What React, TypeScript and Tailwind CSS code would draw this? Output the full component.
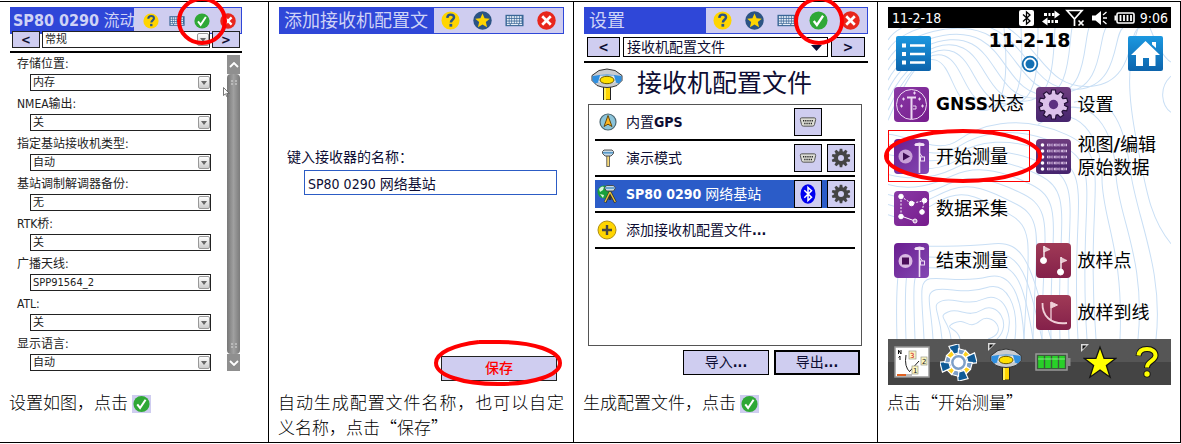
import React from "react";
import clsx from "clsx";

const UI_FONT =
  "font-['DejaVu_Sans_Condensed','DejaVu_Sans','Noto_Sans_CJK_SC',sans-serif]";
const WIDE_FONT = "font-['DejaVu_Sans','Noto_Sans_CJK_SC',sans-serif]";

/* ---------- Small icons ---------- */

const HelpIcon = () => (
  <svg viewBox="0 0 20 20" className="w-full h-full">
    <circle cx="10" cy="10" r="9.5" fill="#ffd500" />
    <path
      d="M6.6 7.2C6.8 4.6 8.3 3.8 10.2 3.8c2.100 0 3.500 1.100 3.500 2.900 0 2.400-3.300 2.700-3.300 5.300"
      fill="none"
      stroke="#2c5484"
      strokeWidth="2.600"
    />
    <rect x="8.900" y="13.600" width="2.900" height="2.900" fill="#2c5484" />
  </svg>
);

const StarIcon = () => (
  <svg viewBox="0 0 20 20" className="w-full h-full">
    <circle cx="10" cy="10" r="9.700" fill="#2c5484" />
    <path
      d="M10 2.500l2.200 5.100 5.500.5-4.200 3.600 1.300 5.500-4.800-2.900-4.800 2.900 1.300-5.500-4.200-3.600 5.500-.5z"
      fill="#ffd500"
    />
  </svg>
);

const KeyboardIcon = () => (
  <svg viewBox="0 0 20 20" className="w-full h-full">
    <rect x="0.500" y="4" width="19" height="12" fill="#3a6796" />
    {[5.4, 8.2, 11].map((y) =>
      [2, 4.7, 7.4, 10.1, 12.8, 15.5].map((x) => (
        <rect key={`${x}-${y}`} x={x} y={y} width="2" height="1.900" fill="#e6edf8" />
      ))
    )}
    <rect x="2" y="13.600" width="3" height="1.200" fill="#e6edf8" />
    <rect x="6" y="13.600" width="8" height="1.200" fill="#e6edf8" />
    <rect x="15" y="13.600" width="3" height="1.200" fill="#e6edf8" />
  </svg>
);

const CheckIcon = () => (
  <svg viewBox="0 0 20 20" className="w-full h-full">
    <circle cx="10" cy="10" r="9.500" fill="#2fa836" />
    <path d="M5 10.500l3.300 4.200L14.800 5" fill="none" stroke="#fff" strokeWidth="2.400" />
  </svg>
);

const CloseIcon = () => (
  <svg viewBox="0 0 20 20" className="w-full h-full">
    <circle cx="10" cy="10" r="9.700" fill="#e8261c" />
    <path d="M5.500 5.500l9 9M14.500 5.500l-9 9" stroke="#fff" strokeWidth="2.800" />
  </svg>
);

const Gear = ({ fill, hole, outline }: { fill: string; hole: string; outline?: string }) => (
  <svg viewBox="-12 -12 24 24" className="w-full h-full">
    {outline && <circle r="9" fill={outline} />}
    {Array.from({ length: 10 }, (_, i) => (
      <path
        key={i}
        d="M-2.200 -7L-1.500 -11.200H1.500L2.200 -7z"
        fill={fill}
        stroke={outline}
        strokeWidth={outline ? 0.9 : 0}
        transform={`rotate(${i * 36})`}
      />
    ))}
    <circle r="8.200" fill={fill} />
    <circle r="3.600" fill={hole} />
  </svg>
);

const SerialIcon = () => (
  <svg viewBox="0 0 20 12" className="w-[18px] h-[10px]">
    <path
      d="M2.500 1h15q2 0 1.700 2l-1.400 6q-.4 2-2.300 2h-11q-1.900 0-2.300-2l-1.400-6q-.3-2 1.700-2z"
      fill="#dcdcd4"
      stroke="#555"
      strokeWidth="1.200"
    />
    <path d="M4 4.500h12.500" stroke="#222" strokeWidth="1.800" strokeDasharray="1.500 1.100" />
    <path d="M5.500 7.700h9.500" stroke="#222" strokeWidth="1.800" strokeDasharray="1.500 1.100" />
  </svg>
);

const BluetoothBadge = () => (
  <svg viewBox="0 0 16 20" className="w-[16px] h-[20px]">
    <ellipse cx="8" cy="10" rx="7.500" ry="9.800" fill="#0000f0" />
    <path
      d="M4.300 6.300l7.200 7L8 16.500v-13l3.500 3.200-7.200 7"
      fill="none"
      stroke="#fff"
      strokeWidth="1.500"
    />
  </svg>
);

const ReceiverIcon = () => (
  <svg viewBox="0 0 32 32" className="w-[32px] h-[32px]">
    <rect x="12.500" y="17" width="7" height="15" fill="#ffd500" stroke="#222" />
    <rect x="13" y="17" width="2" height="15" fill="#ffef5a" />
    <path
      d="M8 2.500Q16 -.5 24 2.500l7 5v5L26 17.500Q16 21.500 6 17.500L1 12.500v-5z"
      fill="#c9ccd0"
      stroke="#333"
    />
    <path d="M1.500 8Q16 5 30.500 8v4.500L28 15.500Q16 11 4 15.500L1.500 12.500z" fill="#2f8fe0" />
    <path d="M9 7.500h14l2 7H7z" fill="#e2e4e6" />
    <ellipse cx="16" cy="12" rx="7" ry="3.700" fill="#ffe000" stroke="#6b5a00" />
  </svg>
);

const CompassIcon = () => (
  <svg viewBox="0 0 18 18" className="w-[18px] h-[18px]">
    <circle cx="9" cy="9" r="8" fill="#8cc4da" stroke="#4c6670" strokeWidth="1.200" />
    <path d="M9 2.500l4 11-4-2.300-4 2.300z" fill="#ffb41e" stroke="#5a3c00" strokeWidth="0.900" />
  </svg>
);

const PoleIcon = () => (
  <svg viewBox="0 0 18 18" className="w-[18px] h-[18px]">
    <rect x="7.800" y="6" width="2.600" height="11.500" fill="#ffe07a" stroke="#555" strokeWidth="0.900" />
    <path d="M5 1h8l1.500 1.500v2L12 7H6L3.500 4.500v-2z" fill="#c7dbe8" stroke="#444" strokeWidth="0.900" />
    <path d="M4 3.200h10v1.300H4z" fill="#3b87c0" />
  </svg>
);

const BaseStationIcon = () => (
  <svg viewBox="0 0 20 20" className="w-[20px] h-[20px]">
    <circle cx="7" cy="8" r="6.500" fill="#18a03c" />
    <path d="M2 5q3-3.500 5-2l-1 3-3 2zM3 10l4 1-1 3z" fill="#d8f5dc" />
    <path d="M13 8L8 18.500M13 8l5.500 10.500M13 8v8" stroke="#333" strokeWidth="2.800" />
    <path d="M13 8L8 18M13 8l5.300 10" stroke="#e8c53c" strokeWidth="1.400" />
    <path d="M9.500 1.500h7L18.500 4l-2 3h-7l-2-3z" fill="#c7dbe8" stroke="#444" strokeWidth="0.900" />
    <path d="M8.500 4h9" stroke="#3b87c0" strokeWidth="1.300" />
  </svg>
);

const AddIcon = () => (
  <svg viewBox="0 0 20 20" className="w-[20px] h-[20px]">
    <circle cx="10" cy="10" r="9" fill="#ffd500" stroke="#b08f10" />
    <path d="M10 5v10M5 10h10" stroke="#444" strokeWidth="2.400" />
  </svg>
);

/* ---------- Shared pieces ---------- */

const titleIcons = {
  help: { label: "帮助", Icon: HelpIcon },
  star: { label: "收藏", Icon: StarIcon },
  keyboard: { label: "键盘", Icon: KeyboardIcon },
  ok: { label: "确定", Icon: CheckIcon },
  close: { label: "关闭", Icon: CloseIcon },
};

type TitleIconName = keyof typeof titleIcons;

const TitleBar = ({
  title,
  icons,
  panelClass,
  iconClass = "w-[19px] h-[19px]",
  circled,
}: {
  title: React.ReactNode;
  icons: TitleIconName[];
  panelClass: string;
  iconClass?: string;
  circled?: boolean;
}) => (
  <div className="flex h-[27px] bg-[#2f47d8] p-px">
    <h2 className="flex-1 min-w-0 overflow-hidden whitespace-nowrap pl-1 text-[18px] leading-[25px] text-[#cfd3f6]">
      {title}
    </h2>
    <div className={clsx("flex items-center justify-around bg-[#cfcdf0]", panelClass)}>
      {icons.map((name) => {
        const { label, Icon } = titleIcons[name];
        return (
          <button key={name} aria-label={label} className={clsx("relative", iconClass)}>
            <Icon />
            {circled && name === "ok" && (
              <svg
                viewBox="0 0 54 50"
                className="absolute z-10 left-1/2 top-1/2 w-[54px] h-[50px] max-w-none -translate-x-1/2 -translate-y-1/2"
              >
                <ellipse cx="27" cy="25" rx="23" ry="22" fill="none" stroke="#f00" strokeWidth="4" />
              </svg>
            )}
          </button>
        );
      })}
    </div>
  </div>
);

const Caption = ({ children }: { children: React.ReactNode }) => (
  <p className="min-h-[50px] text-justify font-['Noto_Sans_CJK_SC',sans-serif] font-light text-[17px] leading-[25px] text-black">
    {children}
  </p>
);

const InlineCheck = () => (
  <span className="inline-block align-middle ml-1 w-[19px] h-[18px] bg-[#cfcdf0] px-px">
    <CheckIcon />
  </span>
);

const Cell = ({ children, caption }: { children: React.ReactNode; caption: React.ReactNode }) => (
  <section className="flex flex-col border-r border-black pl-[9px] pr-[9px] pt-[5px] pb-[3px] min-w-0">
    <div className="flex flex-col flex-1 pl-px">{children}</div>
    <div className="mt-1">
      <Caption>{caption}</Caption>
    </div>
  </section>
);

/* ---------- Screen 1: receiver options ---------- */

const SmallSelect = ({ id, value, label }: { id: string; value: string; label?: string }) => (
  <div className="relative flex-1">
    <select
      id={id}
      aria-label={label}
      className="block w-full h-[17px] appearance-none border border-[#222] bg-white pl-[2px] text-[11px] leading-[15px] text-[#222]"
    >
      <option>{value}</option>
    </select>
    <span className="pointer-events-none absolute right-px top-[2px] flex h-[13px] w-[12px] items-center justify-center rounded-xs border border-[#999] bg-linear-to-b from-white to-[#ccc]">
      <svg viewBox="0 0 6 4" className="w-[6px] h-[4px]">
        <path d="M0 0h6L3 4z" fill="#666" />
      </svg>
    </span>
  </div>
);

const options = [
  { label: "存储位置:", value: "内存" },
  { label: "NMEA输出:", value: "关" },
  { label: "指定基站接收机类型:", value: "自动" },
  { label: "基站调制解调器备份:", value: "无" },
  { label: "RTK桥:", value: "关" },
  { label: "广播天线:", value: "SPP91564_2" },
  { label: "ATL:", value: "关" },
  { label: "显示语言:", value: "自动" },
];

const ScrollBar = () => (
  <div className="relative flex flex-col w-[13px] mt-[2px]">
    <button aria-label="向上" className="flex h-[19px] items-center justify-center bg-[#8f8f8f]">
      <svg viewBox="0 0 10 6" className="w-[10px] h-[6px]">
        <path d="M1 5l4-4 4 4" fill="none" stroke="#fff" strokeWidth="1.800" />
      </svg>
    </button>
    <div className="flex flex-1 flex-col justify-between items-center rounded-sm bg-linear-to-r from-[#777] via-[#a0a0a0] to-[#7c7c7c] py-[6px]">
      {[0, 1].map((i) => (
        <svg key={i} viewBox="0 0 6 5" className="w-[6px] h-[5px]">
          <path d="M0 1h2M4 1h2M0 4h2M4 4h2" stroke="#ddd" strokeWidth="1" />
        </svg>
      ))}
    </div>
    <button aria-label="向下" className="flex h-[17px] items-center justify-center bg-[#8f8f8f]">
      <svg viewBox="0 0 10 6" className="w-[10px] h-[6px]">
        <path d="M1 1l4 4 4-4" fill="none" stroke="#fff" strokeWidth="1.800" />
      </svg>
    </button>
    {/* mouse pointer */}
    <svg viewBox="0 0 7 11" className="absolute -left-1 top-8 w-[7px] h-[11px]">
      <path d="M.5.5v8l2-1.700 1.500 3.200 1-.6-1.300-3h2.600z" fill="#fff" stroke="#555" strokeWidth="0.800" />
    </svg>
  </div>
);

const OptionsScreen = () => (
  <div className={clsx("mr-[17px]", UI_FONT)}>
    <TitleBar
      title={
        <span className="block text-[16px] leading-[25px] -ml-0.5">
          <b>SP80 0290</b> 流动站
        </span>
      }
      icons={["help", "keyboard", "ok", "close"]}
      panelClass="w-[107px] pl-1"
      iconClass="w-[16px] h-[16px]"
      circled
    />
    <div className="flex h-[17px] gap-[2px] px-[2px] -mt-[3px]">
      <button className="w-[28px] border border-[#222] bg-[#cfcdf0] text-[13px] leading-[14px] font-bold text-[#113]">
        &lt;
      </button>
      <SmallSelect id="page" value="常规" label="页面" />
      <button className="w-[28px] border border-[#222] bg-[#cfcdf0] text-[13px] leading-[14px] font-bold text-[#113]">
        &gt;
      </button>
    </div>
    <div className="mt-[3px] h-[2px] bg-black" />
    <div className="flex pl-[7px] pr-[2px]">
      <div className="flex-1 pr-[16px]">
        {options.map((option, index) => (
          <div key={index} className="mb-[2px] last:mb-0">
            <label htmlFor={`opt-${index}`} className="block h-[21px] pt-[2px] text-[12px] leading-[18px] text-[#222]">
              {option.label}
            </label>
            <div className="flex pl-[13px]">
              <SmallSelect id={`opt-${index}`} value={option.value} />
            </div>
          </div>
        ))}
      </div>
      <ScrollBar />
    </div>
  </div>
);

/* ---------- Screen 2: profile name ---------- */

const NameScreen = () => (
  <div className={clsx("flex flex-1 flex-col text-[14px] text-[#0d0d33]", UI_FONT)}>
    <TitleBar
      title="添加接收机配置文"
      icons={["help", "star", "keyboard", "close"]}
      panelClass="w-[129px]"
    />
    <label htmlFor="profile-name" className="mt-[113px] pl-2 leading-5">
      键入接收器的名称：
    </label>
    <input
      id="profile-name"
      defaultValue="SP80 0290 网络基站"
      className="mt-[3px] ml-[25px] mr-[7px] h-[25px] border border-[#2c5cc5] bg-white px-[3px]"
    />
    <button className="relative mt-auto mb-1 mr-[7px] h-[25px] w-[116px] self-end border border-[#222] bg-[#cfcdf0] font-medium text-[#f00]">
      保存
      <svg viewBox="0 0 130 48" className="absolute -left-[9px] -top-[18px] w-[130px] h-[48px] max-w-none">
        <path
          d="M46 3C20 6 3 14 3 24c0 12 26 21 62 21s62-9 62-21S100 3 66 3H46"
          fill="none"
          stroke="#f00"
          strokeWidth="4"
        />
      </svg>
    </button>
  </div>
);

/* ---------- Screen 3: profile list ---------- */

const SquareButton = ({ label, children }: { label: string; children: React.ReactNode }) => (
  <button
    aria-label={label}
    className="flex h-[28px] w-[28px] items-center justify-center border border-black bg-[#cfcdf0]"
  >
    {children}
  </button>
);

const profiles = [
  { name: <>内置<b>GPS</b></>, Icon: CompassIcon, port: "serial", gear: false, selected: false },
  { name: "演示模式", Icon: PoleIcon, port: "serial", gear: true, selected: false },
  { name: <><b>SP80 0290</b> 网络基站</>, Icon: BaseStationIcon, port: "bluetooth", gear: true, selected: true },
  { name: <>添加接收机配置文件<b>...</b></>, Icon: AddIcon, port: "", gear: false, selected: false },
];

const ProfilesScreen = () => (
  <div className={clsx("flex flex-1 flex-col text-[14px] text-[#0d0d33]", UI_FONT)}>
    <TitleBar
      title="设置"
      icons={["help", "star", "keyboard", "ok", "close"]}
      panelClass="w-[161px]"
      circled
    />
    <div className="flex h-[20px] mt-[3px] gap-[3px] px-[3px]">
      <button className="w-[33px] border border-black bg-[#cfcdf0] leading-[18px] font-bold">&lt;</button>
      <div className="relative flex-1">
        <select
          aria-label="设置页面"
          className="block h-[20px] w-full appearance-none border border-black bg-white pl-[3px] leading-[18px]"
        >
          <option>接收机配置文件</option>
        </select>
        <svg viewBox="0 0 11 6" className="pointer-events-none absolute right-[6px] top-[8px] w-[11px] h-[6px]">
          <path d="M0 0h11L5.500 6z" fill="#0d0d33" />
        </svg>
      </div>
      <button className="w-[34px] border border-black bg-[#cfcdf0] leading-[18px] font-bold">&gt;</button>
    </div>
    <div className="mt-1 h-[2px] bg-black" />
    <div className="flex h-[41px] items-center gap-[14px] pl-[7px]">
      <ReceiverIcon />
      <h3 className="text-[25px] leading-8">接收机配置文件</h3>
    </div>
    <ul className="flex-1 ml-1 mr-[6px] border border-[#555] px-[6px]">
      {profiles.map((profile, index) => (
        <li key={index} className="border-b-2 border-black pt-[3px] pb-[3px]">
          <div
            className={clsx(
              "flex h-[28px] items-center gap-[5px]",
              profile.selected && "bg-[#2b5cc8] text-white"
            )}
          >
            <span className="flex w-[26px] justify-end pr-1">
              <profile.Icon />
            </span>
            <span className="flex-1 whitespace-nowrap">{profile.name}</span>
            {profile.port && (
              <SquareButton label="连接">
                {profile.port === "serial" ? <SerialIcon /> : <BluetoothBadge />}
              </SquareButton>
            )}
            {profile.gear ? (
              <SquareButton label="配置">
                <span className="w-[20px] h-[20px]">
                  <Gear fill="#444" hole="#cfcdf0" />
                </span>
              </SquareButton>
            ) : (
              <span className="w-[28px]" />
            )}
          </div>
        </li>
      ))}
    </ul>
    <div className="flex justify-end gap-[5px] mt-1 mb-[10px] mr-[8px]">
      <button className="h-[25px] w-[86px] border border-black bg-[#cfcdf0]">
        导入<b>...</b>
      </button>
      <button className="h-[25px] w-[86px] border-2 border-black bg-[#cfcdf0]">
        导出<b>...</b>
      </button>
    </div>
  </div>
);

/* ---------- Screen 4: survey home ---------- */

const Contours = () => (
  <svg
    viewBox="0 0 283 310"
    preserveAspectRatio="none"
    className="absolute inset-0 w-full h-full"
    fill="none"
    stroke="#c9dff5"
    strokeWidth="1"
  >
    {Array.from({ length: 9 }, (_, i) => (
      <path
        key={`a${i}`}
        d={`M0 ${92 - i * 10}C14 ${60 - i * 9} ${30 + i * 7} ${26 - i * 6} ${48 + i * 9} ${32 - i * 4}S${64 + i * 12} ${78 - i * 2} ${92 + i * 14} ${82 - i * 3}S${120 + i * 15} ${40 - i * 5} ${116 + i * 17} 0`}
      />
    ))}
    {Array.from({ length: 9 }, (_, i) => (
      <path
        key={`b${i}`}
        d={`M0 ${106 + i * 10}C24 ${108 + i * 11} ${50 - i} ${126 + i * 6} ${70 - i} ${112 + i * 7}S${128 - i * 4} ${84 + i * 11} ${178 - i * 7} ${106 + i * 10}S${196 - i * 7} ${160 + i * 8} ${208 - i * 9} 310`}
      />
    ))}
    {Array.from({ length: 8 }, (_, i) => (
      <path
        key={`c${i}`}
        d={`M${72 - i * 9} 310C${70 - i * 9} ${298 - i * 8} ${54 - i * 6} ${300 - i * 12} ${66 - i * 6} ${294 - i * 11}S${80 - i} ${302 - i * 12} ${92 + i * 2} ${292 - i * 11}S${122 + i * 3} ${304 - i * 9} ${100 + i * 9} 310`}
      />
    ))}
    <path d="M150 96C190 70 214 110 214 150S236 220 232 310" />
    <path d="M160 86C206 62 226 104 228 146S258 230 250 310" />
    <path d="M186 74C220 62 236 92 242 140S276 240 268 310" />
    <path d="M250 0C236 40 242 80 250 120S262 190 283 215" />
    <path d="M283 48C270 60 274 78 283 84" />
    <path d="M262 0C270 20 276 30 283 34" />
  </svg>
);

const StatusBar = () => (
  <div className="flex h-[21px] items-center bg-black pl-1 pr-[3px] text-[14px] leading-5 text-white">
    <span className="flex-1">11-2-18</span>
    <svg viewBox="0 0 116 18" className="w-[116px] h-[18px] mr-[5px]">
      <rect x="0" y="1" width="15" height="16" rx="2" fill="#fff" />
      <path d="M4 5.500l7 6.500-3.500 3V3L11 6l-7 6.500" fill="none" stroke="#000" strokeWidth="1.300" />
      <path d="M25 5.500h3M29.500 5.500h2M33 5.500h2.500M39 12.500h-3M34.500 12.500h-2M31 12.500h-2.500" stroke="#fff" strokeWidth="3" />
      <path d="M35.500 1.500v8l5.500-4zM28.500 8.500v8l-5.500-4z" fill="#fff" />
      <path d="M48 1.500h15l-7.500 8.500zM55.500 9v8" fill="none" stroke="#fff" strokeWidth="1.700" />
      <path d="M59.500 11.500l5 5M64.500 11.500l-5 5" stroke="#fff" strokeWidth="1.700" />
      <path d="M73 6.500h3.500L82 2v14l-5.500-4.500H73z" fill="#fff" />
      <path d="M84 9h4M84 6l3.500-3M84 12l3.500 3" stroke="#fff" strokeWidth="1.300" />
      <rect x="98" y="4" width="17" height="10" rx="1.500" fill="none" stroke="#fff" strokeWidth="1.600" />
      <rect x="95.500" y="6.500" width="2" height="5" fill="#fff" />
      <path d="M101.500 6v6M105 6v6M108.500 6v6M112 6v6" stroke="#fff" strokeWidth="1.800" />
    </svg>
    <span>9:06</span>
  </div>
);

const Pole = () => (
  <g stroke="#f0dff5" fill="none">
    <path d="M21 5q4.500-2 9 0v1.500h-9z" fill="#f0dff5" />
    <path d="M25.500 6v28" strokeWidth="1.600" />
    <rect x="26.500" y="18" width="4" height="4" />
    <path d="M25.500 14l3 4" />
  </g>
);

const tileArt: Record<string, React.ReactNode> = {
  gnss: (
    <g stroke="#ecd8f2" fill="none">
      <circle cx="17.500" cy="17.500" r="15" />
      <path d="M13 10.500h9M17.500 11v21" strokeWidth="2" />
      <path d="M19 19h3v3h-3" />
      <path d="M8 12h3M9.500 10.500v3M6 19h3M7.500 17.500v3M19 6h3M20.500 4.500v3M24 12h3M25.500 10.500v3M27 19h3M28.500 17.500v3" />
    </g>
  ),
  start: (
    <>
      <circle cx="11.500" cy="17.500" r="7" fill="#c9a0d8" />
      <path d="M9 13.500l7 4-7 4z" fill="#3d0d52" />
      <Pole />
    </>
  ),
  stop: (
    <>
      <circle cx="11.500" cy="18" r="7" fill="#d9b8e2" />
      <rect x="8" y="14.500" width="7" height="7" fill="#4a0d58" />
      <Pole />
    </>
  ),
  collect: (
    <g stroke="#fff">
      <path d="M7 5.500v20M7 5.500l10.500 7 13-3-2.500 11" fill="none" strokeDasharray="2 1.500" />
      <path d="M7 25l14 5" />
      <g fill="#fff">
        <circle cx="7" cy="5.500" r="2.300" />
        <circle cx="17.500" cy="12.500" r="2.300" />
        <circle cx="30.500" cy="9.500" r="2.300" />
        <circle cx="28" cy="21" r="2.300" />
        <circle cx="7" cy="25.500" r="2.300" />
      </g>
      <circle cx="21" cy="30" r="2" fill="#b98ac4" />
    </g>
  ),
  table: (
    <g>
      {[6, 12, 18, 24, 30].map((y) => (
        <g key={y}>
          <circle cx="6.500" cy={y} r="1.800" fill="#fff" />
          <path d={`M11 ${y}h20`} stroke="#dcc4e6" strokeWidth="2.600" strokeDasharray="3.500 0.800 2 0.800" />
          <path d={`M12 ${y}h18`} stroke="#5a2a7a" strokeWidth="1" strokeDasharray="1.500 2.200" />
        </g>
      ))}
    </g>
  ),
  points: (
    <g fill="#fff" stroke="#fff">
      <path d="M8 18V3M25 28V14" strokeWidth="1.300" />
      <path d="M8 3.500l6 3-6 2.500zM25 14.500l6 3-6 2.500z" fill="#e8c4cc" strokeWidth="0.500" />
      <circle cx="7.500" cy="17.500" r="3" />
      <circle cx="24.500" cy="29" r="3" />
    </g>
  ),
  line: (
    <g fill="none" stroke="#f0d0d8">
      <path d="M6.500 8C6 20 14 30 31 28" strokeWidth="1.800" />
      <path d="M15 26V7" strokeWidth="1.300" />
      <path d="M15 7l6.500 3-6.500 3z" fill="#f0d0d8" />
    </g>
  ),
};

const Tile = ({
  art,
  tone,
  children,
  circled,
}: {
  art: string;
  tone: string;
  children: React.ReactNode;
  circled?: boolean;
}) => (
  <button
    className={clsx(
      "relative flex h-[52px] items-center gap-[7px] pl-[5px] text-left leading-[23px] whitespace-nowrap border",
      circled ? "border-[#f00]" : "border-transparent"
    )}
  >
    <span className={clsx("h-[35px] w-[35px] shrink-0 rounded-sm", tone)}>
      {art === "gear" ? (
        <span className="block h-full w-full p-[2px]">
          <Gear fill="#dcc0ea" hole="#5c3080" outline="#241038" />
        </span>
      ) : (
        <svg viewBox="0 0 35 35" className="h-full w-full">
          {tileArt[art]}
        </svg>
      )}
    </span>
    <span>{children}</span>
    {circled && (
      <svg
        viewBox="0 0 160 56"
        preserveAspectRatio="none"
        className="absolute z-10 -left-[6px] -top-[3px] h-[56px] w-[160px] max-w-none"
      >
        <ellipse cx="80" cy="28" rx="77" ry="25" fill="none" stroke="#f00" strokeWidth="4" />
      </svg>
    )}
  </button>
);

const purple = "bg-linear-to-br from-[#8a3aa6] to-[#761a8c]";
const violet = "bg-linear-to-br from-[#6a1c90] to-[#8448b4]";
const dark = "bg-linear-to-b from-[#6e3c7e] to-[#46246e]";
const wine = "bg-linear-to-b from-[#a03a56] to-[#84204a]";

const CornerMark = () => (
  <svg viewBox="0 0 8 8" className="absolute -left-[2px] -top-[1px] w-[8px] h-[8px]">
    <path d="M0 0h8L0 8z" fill="#ddd" />
    <path d="M1.500 1.500h4l-4 4z" fill="#111" />
  </svg>
);

const ToolBar = () => (
  <div className="grid grid-cols-6 items-center justify-items-center h-[46px] bg-linear-to-b from-[#565656] from-50% to-[#444] to-50%">
    <button aria-label="地图">
      <svg viewBox="0 0 36 32" className="w-[36px] h-[32px]">
        <rect x="1" y="1" width="34" height="30" fill="#fff" stroke="#999" strokeWidth="1.500" />
        <path d="M12 9q-2 12 4 17M16 25l9-10" fill="none" stroke="#222" />
        <path d="M4.500 8V4l2.500 4V4M6 14v-4l-1.500 1.500" fill="none" stroke="#111" />
        <path d="M3 29h9" stroke="#e06020" strokeWidth="2" />
        <path d="M12 29h6" stroke="#bbb" strokeWidth="2" />
        <g fill="#fdf6c0" stroke="#998" strokeWidth="0.700">
          <rect x="15" y="5" width="7" height="8" />
          <rect x="27" y="11" width="6" height="8" />
          <rect x="18" y="20" width="6" height="8" />
        </g>
        <g fontSize="7" fontFamily="DejaVu Sans" fill="#222">
          <text x="16" y="11.500" fill="#c00">3</text>
          <text x="28" y="17.500">2</text>
          <text x="19" y="26.500">1</text>
        </g>
      </svg>
    </button>
    <button aria-label="测量">
      <svg viewBox="-18 -18 36 36" className="w-[37px] h-[37px]">
        {Array.from({ length: 12 }, (_, i) => (
          <path
            key={i}
            d={i % 3 === 0 ? "M-3.500 -9L-5 -17.500H5L3.500 -9z" : "M-2.500 -8L-3.500 -13H3.500L2.500 -8z"}
            fill={i % 3 === 0 ? "#0f5a96" : i % 3 === 1 ? "#7d9fc8" : "#ffd21e"}
            stroke="#fff"
            strokeWidth="1.100"
            transform={`rotate(${i * 30 - 15})`}
          />
        ))}
        <circle r="8.500" fill="#fff" />
        <circle r="6" fill="#fff" stroke="#7d9fc8" strokeWidth="2.400" />
      </svg>
    </button>
    <button aria-label="接收机" className="relative">
      <CornerMark />
      <span className="block pt-1">
        <ReceiverIcon />
      </span>
    </button>
    <button aria-label="电池">
      <svg viewBox="0 0 36 18" className="w-[36px] h-[18px]">
        <rect x="1" y="1" width="31" height="16" fill="#3b5a3b" stroke="#999" strokeWidth="1.500" />
        <rect x="32.500" y="5" width="3" height="8" fill="#888" />
        <path d="M6 3v12M13 3v12M20 3v12M27 3v12" stroke="#28d028" strokeWidth="5.600" />
        <path d="M3 6h27" stroke="#a0f0a0" strokeWidth="1.500" opacity="0.500" />
      </svg>
    </button>
    <button aria-label="收藏夹" className="relative">
      <CornerMark />
      <svg viewBox="1 2 32 30" className="w-[34px] h-[34px]">
        <path
          d="M17 3l3.800 10.500H32l-9 6.800 3.500 11L17 24.600 7.500 31.300l3.500-11-9-6.800h11.200z"
          fill="#ff0"
          stroke="#111"
          strokeWidth="1.200"
        />
      </svg>
    </button>
    <button aria-label="帮助">
      <svg viewBox="0 0 24 32" className="w-[24px] h-[32px]" fill="none">
        <path d="M3.500 10C4 5 7.500 3 12 3c5 0 8.500 2.500 8.500 6.500C20.500 15 12 15 12 22" stroke="#111" strokeWidth="6" />
        <circle cx="12" cy="28" r="3.600" fill="#111" />
        <path d="M3.500 9.500C4 5 7.500 3 12 3c5 0 8.500 2.500 8.500 6.500C20.500 15 12 15 12 21.500" stroke="#ff0" strokeWidth="4" />
        <circle cx="12" cy="28" r="2.700" fill="#ff0" />
      </svg>
    </button>
  </div>
);

const HomeScreen = () => (
  <div className={clsx("flex flex-1 flex-col", UI_FONT)}>
    <StatusBar />
    <div className="relative flex-1 pb-px bg-white">
      <Contours />
      <div className="relative flex justify-between pl-2 pr-[8px] pt-px text-black">
        <button aria-label="菜单" className="mt-[7px] h-[35px] w-[35px] rounded-xs bg-linear-to-b from-[#1c98e0] to-[#0d64ac]">
          <svg viewBox="0 0 35 35" className="h-full w-full">
            <path d="M14 9.500h15M14 18h15M14 26.500h15" stroke="#fff" strokeWidth="2.600" />
            <path d="M6 9.500h4M6 18h4M6 26.500h4" stroke="#fff" strokeWidth="4" />
          </svg>
        </button>
        <div className="flex flex-col items-center">
          <h2 className={clsx("text-[19px] leading-[22px] font-bold", WIDE_FONT)}>11-2-18</h2>
          <svg viewBox="0 0 18 18" className="mt-1 w-[18px] h-[18px]">
            <circle cx="9" cy="9" r="7.300" fill="#fff" stroke="#1470b4" strokeWidth="1.800" />
            <circle cx="9" cy="9" r="4.500" fill="#1470b4" />
          </svg>
        </div>
        <button aria-label="主页" className="mt-[7px] h-[35px] w-[35px] rounded-xs bg-linear-to-b from-[#1c98e0] to-[#0d64ac]">
          <svg viewBox="0 0 35 35" className="h-full w-full">
            <path d="M17.500 5L32 19h-4.500v11H21v-8h-6v8H8V19H3zM24 6h4v6l-4-3.500z" fill="#fff" />
          </svg>
        </button>
      </div>
      <div className={clsx("relative grid grid-cols-2 mt-[5px] text-[18px] text-black", WIDE_FONT)}>
        <div className="flex flex-col">
          <Tile art="gnss" tone={purple}>
            <b className="text-[17px]">GNSS</b>状态
          </Tile>
          <Tile art="start" tone={violet} circled>
            开始测量
          </Tile>
          <Tile art="collect" tone={purple}>
            数据采集
          </Tile>
          <Tile art="stop" tone={violet}>
            结束测量
          </Tile>
        </div>
        <div className="flex flex-col">
          <Tile art="gear" tone={dark}>
            设置
          </Tile>
          <Tile art="table" tone={dark}>
            视图<b>/</b>编辑
            <br />
            原始数据
          </Tile>
          <div className="h-[52px]" />
          <Tile art="points" tone={wine}>
            放样点
          </Tile>
          <Tile art="line" tone={wine}>
            放样到线
          </Tile>
        </div>
      </div>
    </div>
    <ToolBar />
  </div>
);

const App = () => {
  return (
    <main className="mt-px grid grid-cols-[269fr_305fr_304fr_303fr] overflow-x-clip border-y border-black bg-white">
      <Cell
        caption={
          <>
            设置如图，点击
            <InlineCheck />
          </>
        }
      >
        <OptionsScreen />
      </Cell>
      <Cell caption="自动生成配置文件名称，也可以自定义名称，点击“保存”">
        <NameScreen />
      </Cell>
      <Cell
        caption={
          <>
            生成配置文件，点击
            <InlineCheck />
          </>
        }
      >
        <ProfilesScreen />
      </Cell>
      <Cell caption="点击“开始测量”">
        <HomeScreen />
      </Cell>
    </main>
  );
};

export default App;
